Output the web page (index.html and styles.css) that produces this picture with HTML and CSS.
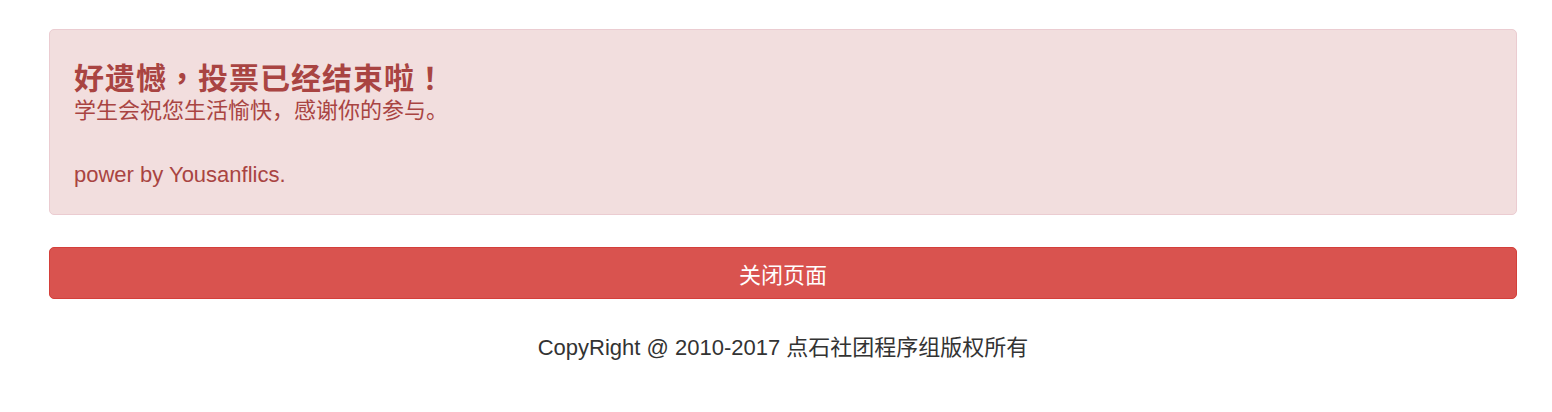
FILE: index.html
```html
<!DOCTYPE html>
<html lang="zh-CN">
<head>
<meta charset="utf-8">
<title>投票已结束</title>
<link rel="stylesheet" href="styles.css">
</head>
<body>
<div class="container">
  <div class="alert">
    <h2 class="alert-title">好遗憾<span class="punct" lang="zh-TW">，</span>投票已经结束啦<span class="punct" lang="zh-TW">！</span></h2>
    <p class="lead">学生会祝您生活愉快，感谢你的参与。<br><br>power by Yousanflics.</p>
  </div>
  <button class="btn-close" type="button">关闭页面</button>
  <footer class="footer">CopyRight @ 2010-2017 点石社团程序组版权所有</footer>
</div>
</body>
</html>
```

FILE: styles.css
```css
html, body {
  margin: 0;
  padding: 0;
  background: #fff;
}
body {
  font-family: "Liberation Sans", "Noto Sans CJK SC", sans-serif;
  color: #333;
  text-spacing-trim: space-all;
}
.container {
  padding: 29px 35px 0 49px;
  display: flex;
  flex-direction: column;
}
.alert {
  background: #f2dede;
  border: 1px solid #ebccd1;
  border-radius: 5px;
  color: #a94442;
  padding: 28px 24px 23px 24px;
}
.alert-title {
  margin: 0;
  font-size: 30px;
  font-weight: bold;
  line-height: 37px;
  letter-spacing: 1px;
  color: #a94442;
  font-family: "Noto Sans CJK SC", sans-serif;
}
.punct {
  font-family: "Noto Sans CJK TC", "Noto Sans CJK SC", sans-serif;
  line-height: 0;
}
.lead {
  margin: 0;
  font-size: 22px;
  line-height: 32px;
}
.btn-close {
  margin-top: 32px;
  height: 52px;
  background: #d9534f;
  border: 1px solid #d43f3a;
  border-radius: 5px;
  color: #fff;
  font-family: inherit;
  font-size: 22px;
  padding: 0;
  cursor: pointer;
}
.footer {
  text-align: center;
  font-size: 22px;
  line-height: 32px;
  padding-top: 33px;
  color: #333;
}
```
